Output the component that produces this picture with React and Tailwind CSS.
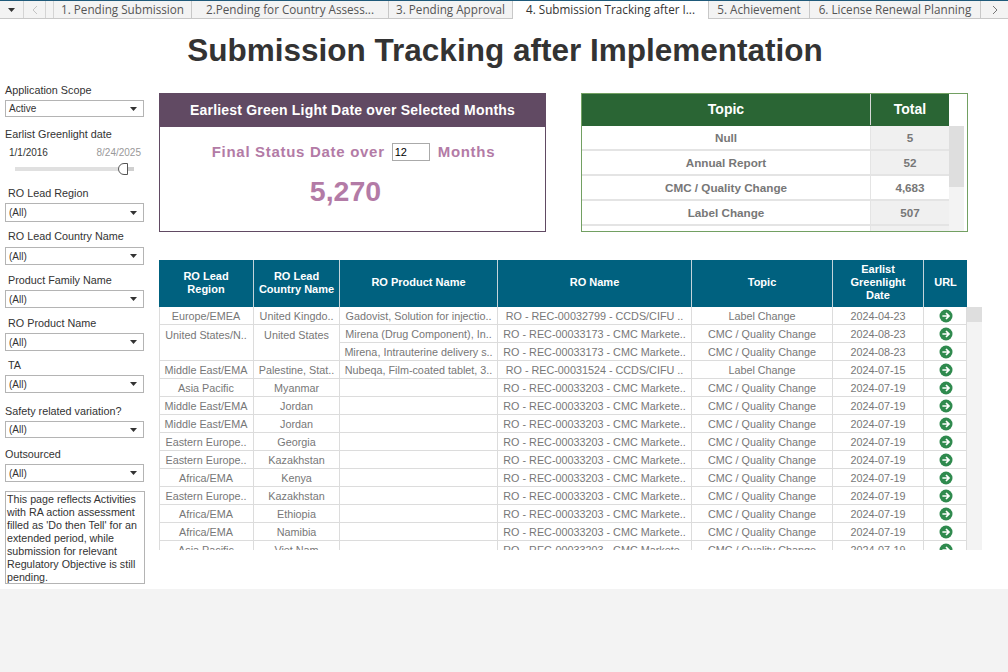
import { Fragment } from 'react'

const sans = "font-['Liberation_Sans',Arial,sans-serif]"

const tabs = [
    { label: '1. Pending Submission', w: 'w-[138px]' },
    { label: '2.Pending for Country Assess...', w: 'w-[197px]' },
    { label: '3. Pending Approval', w: 'w-[124px]' },
    { label: '4. Submission Tracking after I...', w: 'w-[196px]', active: true },
    { label: '5. Achievement', w: 'w-[101px]' },
    { label: '6. License Renewal Planning', w: 'w-[171px]' },
]

const filters = [
    { label: 'RO Lead Region', value: '(All)', cls: 'mt-[12px] pl-[8px]', h: 'h-[19px] mt-[3px]' },
    { label: 'RO Lead Country Name', value: '(All)', cls: 'mt-[8px] pl-[8px]', h: 'h-[18px] mt-[4px]' },
    { label: 'Product Family Name', value: '(All)', cls: 'mt-[9px] pl-[8px]', h: 'h-[18px] mt-[3px]' },
    { label: 'RO Product Name', value: '(All)', cls: 'mt-[9px] pl-[8px]', h: 'h-[18px] mt-[3px]' },
    { label: 'TA', value: '(All)', cls: 'mt-[8px] pl-[8px]', h: 'h-[18px] mt-[3px]' },
    { label: 'Safety related variation?', value: '(All)', cls: 'mt-[12px] pl-[5px]', h: 'h-[17px] mt-[3px]' },
    { label: 'Outsourced', value: '(All)', cls: 'mt-[10px] pl-[5px]', h: 'h-[18px] mt-[3px]' },
]

const topics = [
    { topic: 'Null', total: '5', bg: 'bg-[#f0f0f0]' },
    { topic: 'Annual Report', total: '52', bg: 'bg-[#f0f0f0]' },
    { topic: 'CMC / Quality Change', total: '4,683', bg: 'bg-white' },
    { topic: 'Label Change', total: '507', bg: 'bg-[#f0f0f0]' },
    { topic: '', total: '', bg: 'bg-[#f0f0f0]' },
]

const gridCols = 'grid-cols-[95px_86px_158px_194px_141px_91px_43px]'

const headers = [
    'RO Lead\nRegion',
    'RO Lead\nCountry Name',
    'RO Product Name',
    'RO Name',
    'Topic',
    'Earlist\nGreenlight\nDate',
    'URL',
]

const cmc = 'RO - REC-00033203 - CMC Markete..'
const rows = [
    ['Europe/EMEA', 'United Kingdo..', 'Gadovist, Solution for injectio..', 'RO - REC-00032799 - CCDS/CIFU ..', 'Label Change', '2024-04-23'],
    ['United States/N..', 'United States', 'Mirena (Drug Component), In..', 'RO - REC-00033173 - CMC Markete..', 'CMC / Quality Change', '2024-08-23'],
    ['', '', 'Mirena, Intrauterine delivery s..', 'RO - REC-00033173 - CMC Markete..', 'CMC / Quality Change', '2024-08-23'],
    ['Middle East/EMA', 'Palestine, Stat..', 'Nubeqa, Film-coated tablet, 3..', 'RO - REC-00031524 - CCDS/CIFU ..', 'Label Change', '2024-07-15'],
    ['Asia Pacific', 'Myanmar', '', cmc, 'CMC / Quality Change', '2024-07-19'],
    ['Middle East/EMA', 'Jordan', '', cmc, 'CMC / Quality Change', '2024-07-19'],
    ['Middle East/EMA', 'Jordan', '', cmc, 'CMC / Quality Change', '2024-07-19'],
    ['Eastern Europe..', 'Georgia', '', cmc, 'CMC / Quality Change', '2024-07-19'],
    ['Eastern Europe..', 'Kazakhstan', '', cmc, 'CMC / Quality Change', '2024-07-19'],
    ['Africa/EMA', 'Kenya', '', cmc, 'CMC / Quality Change', '2024-07-19'],
    ['Eastern Europe..', 'Kazakhstan', '', cmc, 'CMC / Quality Change', '2024-07-19'],
    ['Africa/EMA', 'Ethiopia', '', cmc, 'CMC / Quality Change', '2024-07-19'],
    ['Africa/EMA', 'Namibia', '', cmc, 'CMC / Quality Change', '2024-07-19'],
    ['Asia Pacific', 'Viet Nam', '', cmc, 'CMC / Quality Change', '2024-07-19'],
]

function Caret() {
    return (
        <svg width="7" height="4" viewBox="0 0 7 4" className="shrink-0">
            <path d="M0 0h7L3.5 4z" fill="#333" />
        </svg>
    )
}

function Select({ value, className }) {
    return (
        <div className={`flex items-center justify-between w-[139px] ml-[5px] border border-[#b4b4b4] bg-white pl-[3px] pr-[6px] text-[10px] text-[#333] ${className}`}>
            <span>{value}</span>
            <Caret />
        </div>
    )
}

function GoIcon() {
    return (
        <svg width="14" height="14" viewBox="0 0 14 14">
            <circle cx="7" cy="7" r="6.5" fill="#2f8a4e" />
            <path d="M3.4 7h6.4M7 4l3 3-3 3" fill="none" stroke="#fff" strokeWidth="1.7" />
        </svg>
    )
}

function TabBar() {
    return (
        <div className="flex h-[19px] border-t border-t-[#1f5a7a] border-b border-b-[#c8c8c8] bg-[#f3f3f3] text-[11.7px] text-[#555] font-['Open_Sans',sans-serif]">
            <div className="flex items-center justify-center w-[24px] border-r border-[#d4d4d4]">
                <Caret />
            </div>
            <div className="flex items-center justify-center w-[22px] border-r border-[#d4d4d4] text-[#bbb]">
                <svg width="6" height="10" viewBox="0 0 6 10"><path d="M5 1 1 5l4 4" fill="none" stroke="#c4c4c4" /></svg>
            </div>
            <div className="w-[8px] border-r border-[#d4d4d4]" />
            {tabs.map((t) => (
                <div
                    key={t.label}
                    className={`${t.w} flex items-center justify-center whitespace-nowrap border-r border-[#c8c8c8] ${t.active ? 'bg-white text-[#333] h-[18px]' : ''}`}
                >
                    {t.label}
                </div>
            ))}
            <div className="flex flex-1 items-center justify-center">
                <svg width="6" height="10" viewBox="0 0 6 10"><path d="m1 1 4 4-4 4" fill="none" stroke="#777" /></svg>
            </div>
        </div>
    )
}

function Sidebar() {
    return (
        <aside className={`w-[159px] shrink-0 text-[10.8px] leading-[13px] text-[#333] ${sans}`}>
            <div className="pl-[5px]">Application Scope</div>
            <Select value="Active" className="h-[17px] mt-[3px]" />
            <div className="pl-[5px] mt-[11px]">Earlist Greenlight date</div>
            <div className="flex justify-between pl-[9px] pr-[18px] mt-[6px] text-[10px] leading-[12px]">
                <span>1/1/2016</span>
                <span className="text-[#999]">8/24/2025</span>
            </div>
            <div className="flex items-center ml-[15px] mt-[4px] h-[12px] w-[119px]">
                <div className="w-[103px] h-[4px] bg-[#e0e0e0]" />
                <div className="w-[10px] h-[12px] shrink-0 rounded-l-full border border-[#555] bg-white" />
                <div className="flex-1 h-[4px] bg-[#d0d0d0]" />
            </div>
            {filters.map((f) => (
                <Fragment key={f.label}>
                    <div className={f.cls}>{f.label}</div>
                    <Select value={f.value} className={f.h} />
                </Fragment>
            ))}
            <div className="ml-[5px] mt-[9px] w-[140px] h-[93px] border border-[#b4b4b4] px-[1px] pt-[1px] leading-[13px] text-[10.7px]">
                This page reflects Activities with RA action assessment filled as 'Do then Tell' for an extended period, while submission for relevant Regulatory Objective is still pending.
            </div>
        </aside>
    )
}

function GreenLightCard() {
    return (
        <div className={`w-[387px] h-[139px] border border-[#614a63] ${sans}`}>
            <div className="flex items-center justify-center h-[33px] bg-[#614a63] text-[14px] font-bold tracking-[0.2px] text-white">
                Earliest Green Light Date over Selected Months
            </div>
            <div className="flex items-center justify-center mt-[16px] h-[18px] pl-[2px] text-[15px] font-bold tracking-[0.7px] text-[#b37ba6]">
                <span>Final Status Date over</span>
                <div className="w-[38px] h-[18px] ml-[7px] mr-[8px] border border-[#aaa] pl-[2px] text-[11px] leading-[16px] font-normal tracking-normal text-black">12</div>
                <span>Months</span>
            </div>
            <div className="mt-[13px] pr-[14px] text-center text-[28.5px] leading-[34px] font-bold text-[#b37ba6]">5,270</div>
        </div>
    )
}

function TopicTable() {
    return (
        <div className={`w-[387px] h-[139px] overflow-hidden border border-[#72a062] ${sans}`}>
            <div className="flex">
                <div className="w-[367px] shrink-0">
                    <div className="flex h-[32px] pb-[1px] bg-[#2a6534] text-[14px] font-bold text-white">
                        <div className="flex items-center justify-center w-[289px] border-r border-[#d8d8d8]">Topic</div>
                        <div className="flex flex-1 items-center justify-center">Total</div>
                    </div>
                    {topics.map((t, i) => (
                        <div key={i} className="flex h-[25px] border-b-2 border-[#e4e4e4] text-[11.7px] font-bold text-[#777]">
                            <div className="flex items-center justify-center w-[289px] border-r border-[#e4e4e4]">{t.topic}</div>
                            <div className={`flex flex-1 items-center justify-center ${t.bg}`}>{t.total}</div>
                        </div>
                    ))}
                </div>
                <div className="w-[15px] mt-[32px] h-[105px] bg-[#f3f3f3]">
                    <div className="h-[61px] bg-[#dedede]" />
                </div>
            </div>
        </div>
    )
}

function DetailTable() {
    return (
        <div className={`flex mt-[28px] ${sans}`}>
            <div className="w-[808px] shrink-0">
                <div className={`grid ${gridCols} h-[47px] text-[11px] leading-[13px] font-bold text-white`}>
                    {headers.map((h, i) => (
                        <div key={h} className={`flex items-center justify-center whitespace-pre-line pb-[2px] text-center bg-[#00617f] ${i < headers.length - 1 ? 'border-r border-[#c4d4da]' : ''}`}>
                            {h}
                        </div>
                    ))}
                </div>
                <div className="h-[243px] overflow-hidden border-l border-r border-[#dcdcdc]">
                    {rows.map((r, ri) => (
                        <div key={ri} className={`grid ${gridCols} h-[18px] -ml-px -mr-px text-[10.8px] text-[#777]`}>
                            {r.map((c, ci) => (
                                <div key={ci} className={`flex items-center justify-center whitespace-nowrap pt-[1px] border-r ${ri === 1 && ci < 2 ? 'border-[#dcdcdc]' : 'border-b border-[#dcdcdc]'}`}>
                                    {c}
                                </div>
                            ))}
                            <div className="flex items-center justify-center border-b border-[#dcdcdc]">
                                <GoIcon />
                            </div>
                        </div>
                    ))}
                </div>
            </div>
            <div className="w-[15px] mt-[47px] h-[243px] bg-[#f3f3f3]">
                <div className="h-[15px] bg-[#dedede]" />
            </div>
        </div>
    )
}

export default function App() {
    return (
        <div className="min-h-[672px] bg-[#f3f3f3]">
            <TabBar />
            <div className="h-[570px] bg-white">
                <h1 className={`h-[65px] pt-[12px] pl-[2px] text-center text-[31.5px] leading-[38px] font-bold text-[#333] ${sans}`}>
                    Submission Tracking after Implementation
                </h1>
                <div className="flex">
                    <Sidebar />
                    <main className="flex-1 pt-[9px]">
                        <div className="flex gap-[35px]">
                            <GreenLightCard />
                            <TopicTable />
                        </div>
                        <DetailTable />
                    </main>
                </div>
            </div>
        </div>
    )
}
